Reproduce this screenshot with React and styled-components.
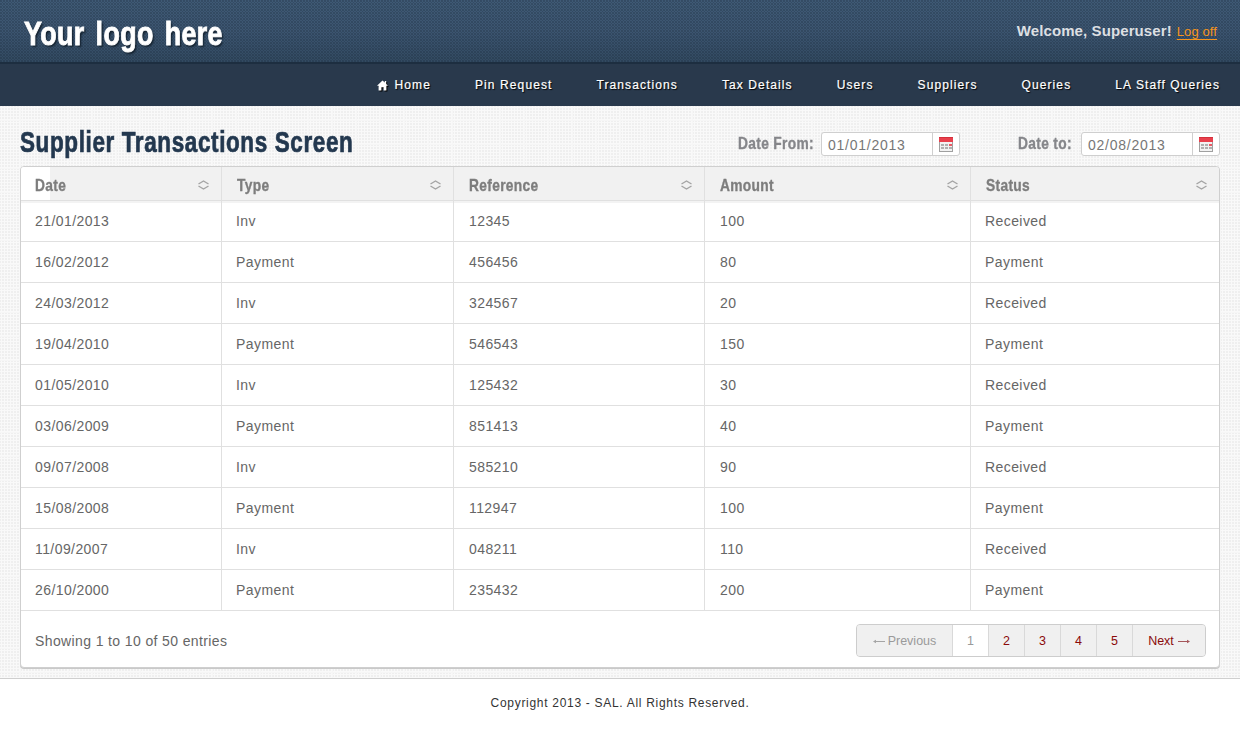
import React from "react";
import styled, { createGlobalStyle } from "styled-components";

const Global = createGlobalStyle`
  html, body { margin: 0; padding: 0; background: #fff; }
  body { font-family: "Liberation Sans", Arial, sans-serif; color: #666; }
  * { box-sizing: border-box; }
  a { text-decoration: none; }
`;

const Page = styled.div`
  width: 1240px;
  height: 730px;
  overflow: hidden;
  display: flex;
  flex-direction: column;
`;

const TopBar = styled.header`
  height: 64px;
  padding: 0 23px 0 24px;
  display: flex;
  justify-content: space-between;
  align-items: flex-start;
  border-bottom: 2px solid #1d2e40;
  background-image:
    radial-gradient(circle at 1px 1px, rgba(18, 32, 48, 0.24) 0.8px, transparent 1px),
    radial-gradient(circle at 2.5px 2.5px, rgba(18, 32, 48, 0.24) 0.8px, transparent 1px),
    linear-gradient(#3f5a75 0%, #3c5570 50%, #324a61 100%);
  background-size: 3px 3px, 3px 3px, 100% 100%;
`;

const Logo = styled.div`
  width: 198px;
  white-space: nowrap;
  transform: scaleX(0.79);
  transform-origin: left center;
  font-weight: 700;
  font-size: 34px;
  line-height: 40px;
  margin-top: 13px;
  letter-spacing: 0.45px;
  word-spacing: 4px;
  color: #fff;
  -webkit-text-stroke: 0.9px #fff;
  text-shadow: 2px 2px 2px rgba(10, 20, 30, 0.75);
`;

const Welcome = styled.div`
  margin-top: 22px;
  font-size: 15px;
  line-height: 18px;
  font-weight: 700;
  letter-spacing: 0.1px;
  color: #dcdfe2;
`;

const LogOff = styled.a`
  margin-left: 5px;
  font-size: 13px;
  letter-spacing: 0.1px;
  font-weight: 400;
  color: #f7941d;
  text-decoration: underline;
  text-underline-offset: 3px;
`;

const Nav = styled.nav`
  height: 42px;
  background: #29394c;
  display: flex;
  justify-content: flex-end;
  align-items: center;
  gap: 44px;
  padding-right: 20px;
`;

const NavItem = styled.a`
  display: flex;
  align-items: center;
  gap: 7px;
  font-size: 12px;
  letter-spacing: 1.1px;
  color: #fff;
  -webkit-text-stroke: 0.2px #fff;
  text-shadow: 1px 1px 1px #000;
  white-space: nowrap;
`;

const HomeIcon = styled.svg`
  flex: none;
  filter: drop-shadow(1px 1px 0 #000);
`;

const Main = styled.main`
  flex: 0 0 573px;
  padding: 0 20px;
  border-bottom: 1px solid #cfcfcf;
  background-color: #efefef;
  background-image:
    linear-gradient(90deg, #f6f6f6 1px, transparent 1px),
    linear-gradient(#f6f6f6 1px, transparent 1px),
    radial-gradient(circle at 1.5px 1.5px, #f9f9f9 1px, transparent 1.1px);
  background-size: 24px 24px, 24px 24px, 3px 3px;
  background-position: 20px 14px, 20px 14px, 0 0;
`;

const TitleRow = styled.div`
  height: 60px;
  display: flex;
  align-items: flex-start;
`;

const Title = styled.h1`
  flex: 1;
  margin: 19px 0 0 0;
  white-space: nowrap;
  transform: scaleX(0.775);
  transform-origin: left center;
  font-weight: 700;
  font-size: 29px;
  line-height: 34px;
  letter-spacing: 0.8px;
  color: #23384f;
  -webkit-text-stroke: 0.7px #23384f;
`;

const DateField = styled.div`
  margin-top: 26px;
  margin-left: ${(p) => p.$gap}px;
  display: flex;
  align-items: center;
  gap: 7px;
`;

const DateLabel = styled.label`
  width: ${(p) => p.$w}px;
  white-space: nowrap;
  transform: scaleX(0.81);
  transform-origin: left center;
  font-weight: 700;
  font-size: 17px;
  letter-spacing: 0.4px;
  color: #85868a;
  -webkit-text-stroke: 0.35px #85868a;
`;

const DateBox = styled.div`
  width: 139px;
  height: 24px;
  display: flex;
  background: #fff;
  border: 1px solid #cfcfcf;
  border-radius: 3px;
`;

const DateValue = styled.span`
  flex: 1;
  padding-left: 6px;
  font-size: 14px;
  line-height: 24px;
  letter-spacing: 0.75px;
  color: #777;
`;

const CalButton = styled.span`
  width: 27px;
  border-left: 1px solid #cfcfcf;
  display: flex;
  align-items: center;
  justify-content: center;
`;

const Card = styled.section`
  height: 502px;
  background: #fff;
  border: 1px solid #cfcfcf;
  border-radius: 4px;
  box-shadow: 0 1px 0 #c9c9c9;
  overflow: hidden;
`;

const Table = styled.table`
  width: 1198px;
  table-layout: fixed;
  border-collapse: separate;
  border-spacing: 0;
`;

const HeadCell = styled.th`
  height: 34px;
  padding: 5px 0 0 ${(p) => p.$pad}px;
  position: relative;
  text-align: left;
  background: ${(p) => (p.$first ? "linear-gradient(90deg, #fff 29px, #f1f1f1 29px)" : "#f1f1f1")};
  border-bottom: 1px solid #e0e0e0;
  border-right: ${(p) => (p.$last ? "none" : "1px solid #e0e0e0")};
`;

const HeadLabel = styled.span`
  display: block;
  white-space: nowrap;
  transform: scaleX(0.81);
  transform-origin: left center;
  font-weight: 700;
  font-size: 17px;
  letter-spacing: 0.4px;
  color: #7d7d7d;
  -webkit-text-stroke: 0.35px #7d7d7d;
`;

const SortIcon = styled.svg`
  position: absolute;
  top: 13px;
  right: 12px;
`;

const Row = styled.tr`
  &:first-child td {
    background: linear-gradient(#f3f3f3 2px, #fff 2px);
  }
`;

const Cell = styled.td`
  height: 41px;
  padding: 0 0 0 ${(p) => p.$pad}px;
  border-bottom: 1px solid #e0e0e0;
  border-right: ${(p) => (p.$last ? "none" : "1px solid #e0e0e0")};
  font-size: 14px;
  letter-spacing: 0.42px;
  color: #666;
`;

const Footer = styled.div`
  height: 57px;
  display: flex;
  align-items: flex-start;
  justify-content: space-between;
  padding: 13px 13px 0 14px;
`;

const Info = styled.div`
  margin-top: 9px;
  font-size: 14px;
  line-height: 17px;
  letter-spacing: 0.38px;
  color: #666;
`;

const Pager = styled.div`
  display: flex;
  height: 33px;
  border: 1px solid #cdcdcd;
  border-radius: 4px;
  overflow: hidden;
  background: #f0f0f0;
`;

const PageCell = styled.a`
  width: ${(p) => p.$w}px;
  display: flex;
  align-items: center;
  justify-content: center;
  font-size: 12.5px;
  color: ${(p) => (p.$muted ? "#9a9a9a" : "#8b0a0a")};
  background: ${(p) => (p.$current ? "#fff" : "#f0f0f0")};
  border-right: ${(p) => (p.$end ? "none" : "1px solid #d9d9d9")};
`;

const Arrow = styled.svg`
  flex: none;
  margin: ${(p) => p.$m};
`;

const Copy = styled.footer`
  padding-top: 17px;
  text-align: center;
  font-size: 12px;
  line-height: 14px;
  letter-spacing: 0.7px;
  color: #333;
`;

const Calendar = () => (
  <svg width="14" height="15" viewBox="0 0 14 15">
    <rect x="0.5" y="0.5" width="13" height="14" fill="#f2f2f2" stroke="#a0a0a0" />
    <rect x="0" y="0" width="14" height="5" fill="#e8404c" />
    <rect x="0" y="0" width="14" height="1" fill="#d42f3b" />
    <g fill="#b0b0b0">
      <rect x="2" y="7" width="3" height="2" />
      <rect x="6" y="7" width="3" height="2" />
      <rect x="2" y="10" width="3" height="2" />
      <rect x="6" y="10" width="3" height="2" />
    </g>
    <rect x="10" y="7" width="3" height="2" fill="#ea5a64" />
    <rect x="10" y="10" width="3" height="2" fill="#b0b0b0" />
  </svg>
);

const Sort = () => (
  <SortIcon width="11" height="10" viewBox="0 0 11 10" fill="none" stroke="#a4a4a4" strokeWidth="1.4">
    <path d="M0.5 4 L5.5 1 L10.5 4" />
    <path d="M0.5 6 L5.5 9 L10.5 6" />
  </SortIcon>
);

const House = () => (
  <HomeIcon width="11" height="11" viewBox="0 0 11 11" fill="#fff">
    <path d="M5.5 0.5 L0 5.8 H1.6 V10.5 H4.4 V7.2 H6.6 V10.5 H9.4 V5.8 H11 L9.2 4 V1 H7.8 V2.6 Z" />
  </HomeIcon>
);

const LineArrow = ({ left, color }) => (
  <Arrow $m={left ? "1px 3px 0 0" : "1px 0 0 4px"} width="12" height="7" viewBox="0 0 12 7">
    <path d={left ? "M0 3.5 L3 1.8 V3 H12 V4 H3 V5.2 Z" : "M12 3.5 L9 1.8 V3 H0 V4 H9 V5.2 Z"} fill={color} />
  </Arrow>
);

const columns = [
  { name: "Date", w: 201, pad: 14, first: true },
  { name: "Type", w: 232, pad: 15 },
  { name: "Reference", w: 251, pad: 15 },
  { name: "Amount", w: 266, pad: 15 },
  { name: "Status", w: 248, pad: 15, last: true },
];

const cellPads = [14, 14, 15, 15, 14];

const rows = [
  ["21/01/2013", "Inv", "12345", "100", "Received"],
  ["16/02/2012", "Payment", "456456", "80", "Payment"],
  ["24/03/2012", "Inv", "324567", "20", "Received"],
  ["19/04/2010", "Payment", "546543", "150", "Payment"],
  ["01/05/2010", "Inv", "125432", "30", "Received"],
  ["03/06/2009", "Payment", "851413", "40", "Payment"],
  ["09/07/2008", "Inv", "585210", "90", "Received"],
  ["15/08/2008", "Payment", "112947", "100", "Payment"],
  ["11/09/2007", "Inv", "048211", "110", "Received"],
  ["26/10/2000", "Payment", "235432", "200", "Payment"],
];

const navItems = ["Pin Request", "Transactions", "Tax Details", "Users", "Suppliers", "Queries", "LA Staff Queries"];

export default function App() {
  return (
    <Page>
      <Global />
      <TopBar>
        <Logo>Your logo here</Logo>
        <Welcome>
          Welcome, Superuser!<LogOff href="#">Log off</LogOff>
        </Welcome>
      </TopBar>
      <Nav>
        <NavItem href="#">
          <House />
          Home
        </NavItem>
        {navItems.map((n) => (
          <NavItem href="#" key={n}>{n}</NavItem>
        ))}
      </Nav>
      <Main>
        <TitleRow>
          <Title>Supplier Transactions Screen</Title>
          <DateField $gap={0}>
            <DateLabel $w={76}>Date From:</DateLabel>
            <DateBox>
              <DateValue>01/01/2013</DateValue>
              <CalButton><Calendar /></CalButton>
            </DateBox>
          </DateField>
          <DateField $gap={58}>
            <DateLabel $w={56}>Date to:</DateLabel>
            <DateBox>
              <DateValue>02/08/2013</DateValue>
              <CalButton><Calendar /></CalButton>
            </DateBox>
          </DateField>
        </TitleRow>
        <Card>
          <Table>
            <colgroup>
              {columns.map((c) => <col key={c.name} width={c.w} />)}
            </colgroup>
            <thead>
              <tr>
                {columns.map((c) => (
                  <HeadCell key={c.name} $pad={c.pad} $first={c.first} $last={c.last}>
                    <HeadLabel>{c.name}</HeadLabel>
                    <Sort />
                  </HeadCell>
                ))}
              </tr>
            </thead>
            <tbody>
              {rows.map((r) => (
                <Row key={r[0]}>
                  {r.map((v, i) => (
                    <Cell key={i} $pad={cellPads[i]} $last={i === 4}>{v}</Cell>
                  ))}
                </Row>
              ))}
            </tbody>
          </Table>
          <Footer>
            <Info>Showing 1 to 10 of 50 entries</Info>
            <Pager>
              <PageCell $w={96} $muted href="#"><LineArrow left color="#a5a5a5" />Previous</PageCell>
              <PageCell $w={36} $muted $current href="#">1</PageCell>
              <PageCell $w={36} href="#">2</PageCell>
              <PageCell $w={36} href="#">3</PageCell>
              <PageCell $w={36} href="#">4</PageCell>
              <PageCell $w={36} href="#">5</PageCell>
              <PageCell $w={72} $end href="#">Next<LineArrow color="#a5565a" /></PageCell>
            </Pager>
          </Footer>
        </Card>
      </Main>
      <Copy>Copyright 2013 - SAL. All Rights Reserved.</Copy>
    </Page>
  );
}
